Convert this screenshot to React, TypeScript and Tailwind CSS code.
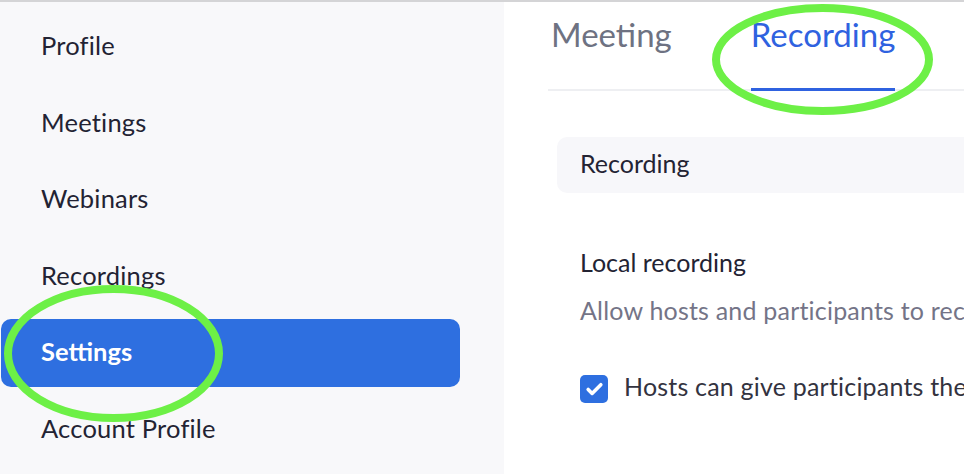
import { Check } from 'lucide-react';

const navItems = ['Profile', 'Meetings', 'Webinars', 'Recordings', 'Settings', 'Account Profile'];

const Sidebar = () => {
  return (
    <aside className="w-[504px] shrink-0 bg-[#f8f8fa] pt-[11px] flex flex-col gap-[8.6px]">
      {navItems.map(item => {
        const active = item === 'Settings';
        return (
          <div
            key={item}
            className={`ml-px w-[459px] h-[68px] rounded-[10px] pl-[40px] text-[25.5px] leading-[64px] ${
              active ? 'bg-[#2e6fe0] text-white font-bold' : 'text-[#232333] tracking-[0.2px]'
            }`}
          >
            {item}
          </div>
        );
      })}
    </aside>
  );
};

const Tabs = () => {
  return (
    <div className="ml-[44px] h-[89px] flex border-b-2 border-[#eeeff2] whitespace-nowrap">
      <div className="pl-[3px] pt-[13px] text-[33px] leading-[38px] text-[#6e7282]">Meeting</div>
      <div className="ml-[79px] -mb-[2px] pt-[13px] text-[33px] leading-[38px] text-[#2f62e0] border-b-[3px] border-[#2f62e0]">
        Recording
      </div>
    </div>
  );
};

export default function App() {
  return (
    <div
      className="relative w-[964px] h-[474px] overflow-hidden bg-white border-t-2 border-[#d4d4d6] flex"
      style={{ fontFamily: 'Lato, "Noto Sans", sans-serif' }}
    >
      <Sidebar />

      <main className="flex-1 min-w-0 overflow-hidden whitespace-nowrap">
        <Tabs />

        <div className="mt-[46px] ml-[53px] -mr-[40px] h-[56px] rounded-[10px] bg-[#f7f7fa] pl-[23px] text-[25px] leading-[52px] text-[#232333]">
          Recording
        </div>

        <div className="ml-[76px] mt-[54px] text-[25px] leading-[30px]">
          <div className="text-[#232333]">Local recording</div>
          <div className="mt-[18px] text-[#747487] tracking-[0.2px]">
            Allow hosts and participants to record the meeting to a local file
          </div>
          <div className="mt-[46px] flex items-start gap-[16px]">
            <span className="mt-[4px] w-[28px] h-[28px] shrink-0 rounded-[5px] bg-[#2e6fe0] flex items-center justify-center">
              <Check className="w-[19px] h-[19px] text-white" strokeWidth={4.5} />
            </span>
            <span className="text-[#33333f] tracking-[0.2px]">
              Hosts can give participants the permission to record locally
            </span>
          </div>
        </div>
      </main>

      {/* annotation circles */}
      <svg className="absolute inset-0 pointer-events-none" width="964" height="474" viewBox="0 0 964 474">
        <ellipse cx="822.5" cy="57.5" rx="106.5" ry="51.5" fill="none" stroke="#6df046" strokeWidth="8" />
        <ellipse cx="113.5" cy="351.5" rx="105.5" ry="64.5" fill="none" stroke="#6df046" strokeWidth="8" />
      </svg>
    </div>
  );
}
